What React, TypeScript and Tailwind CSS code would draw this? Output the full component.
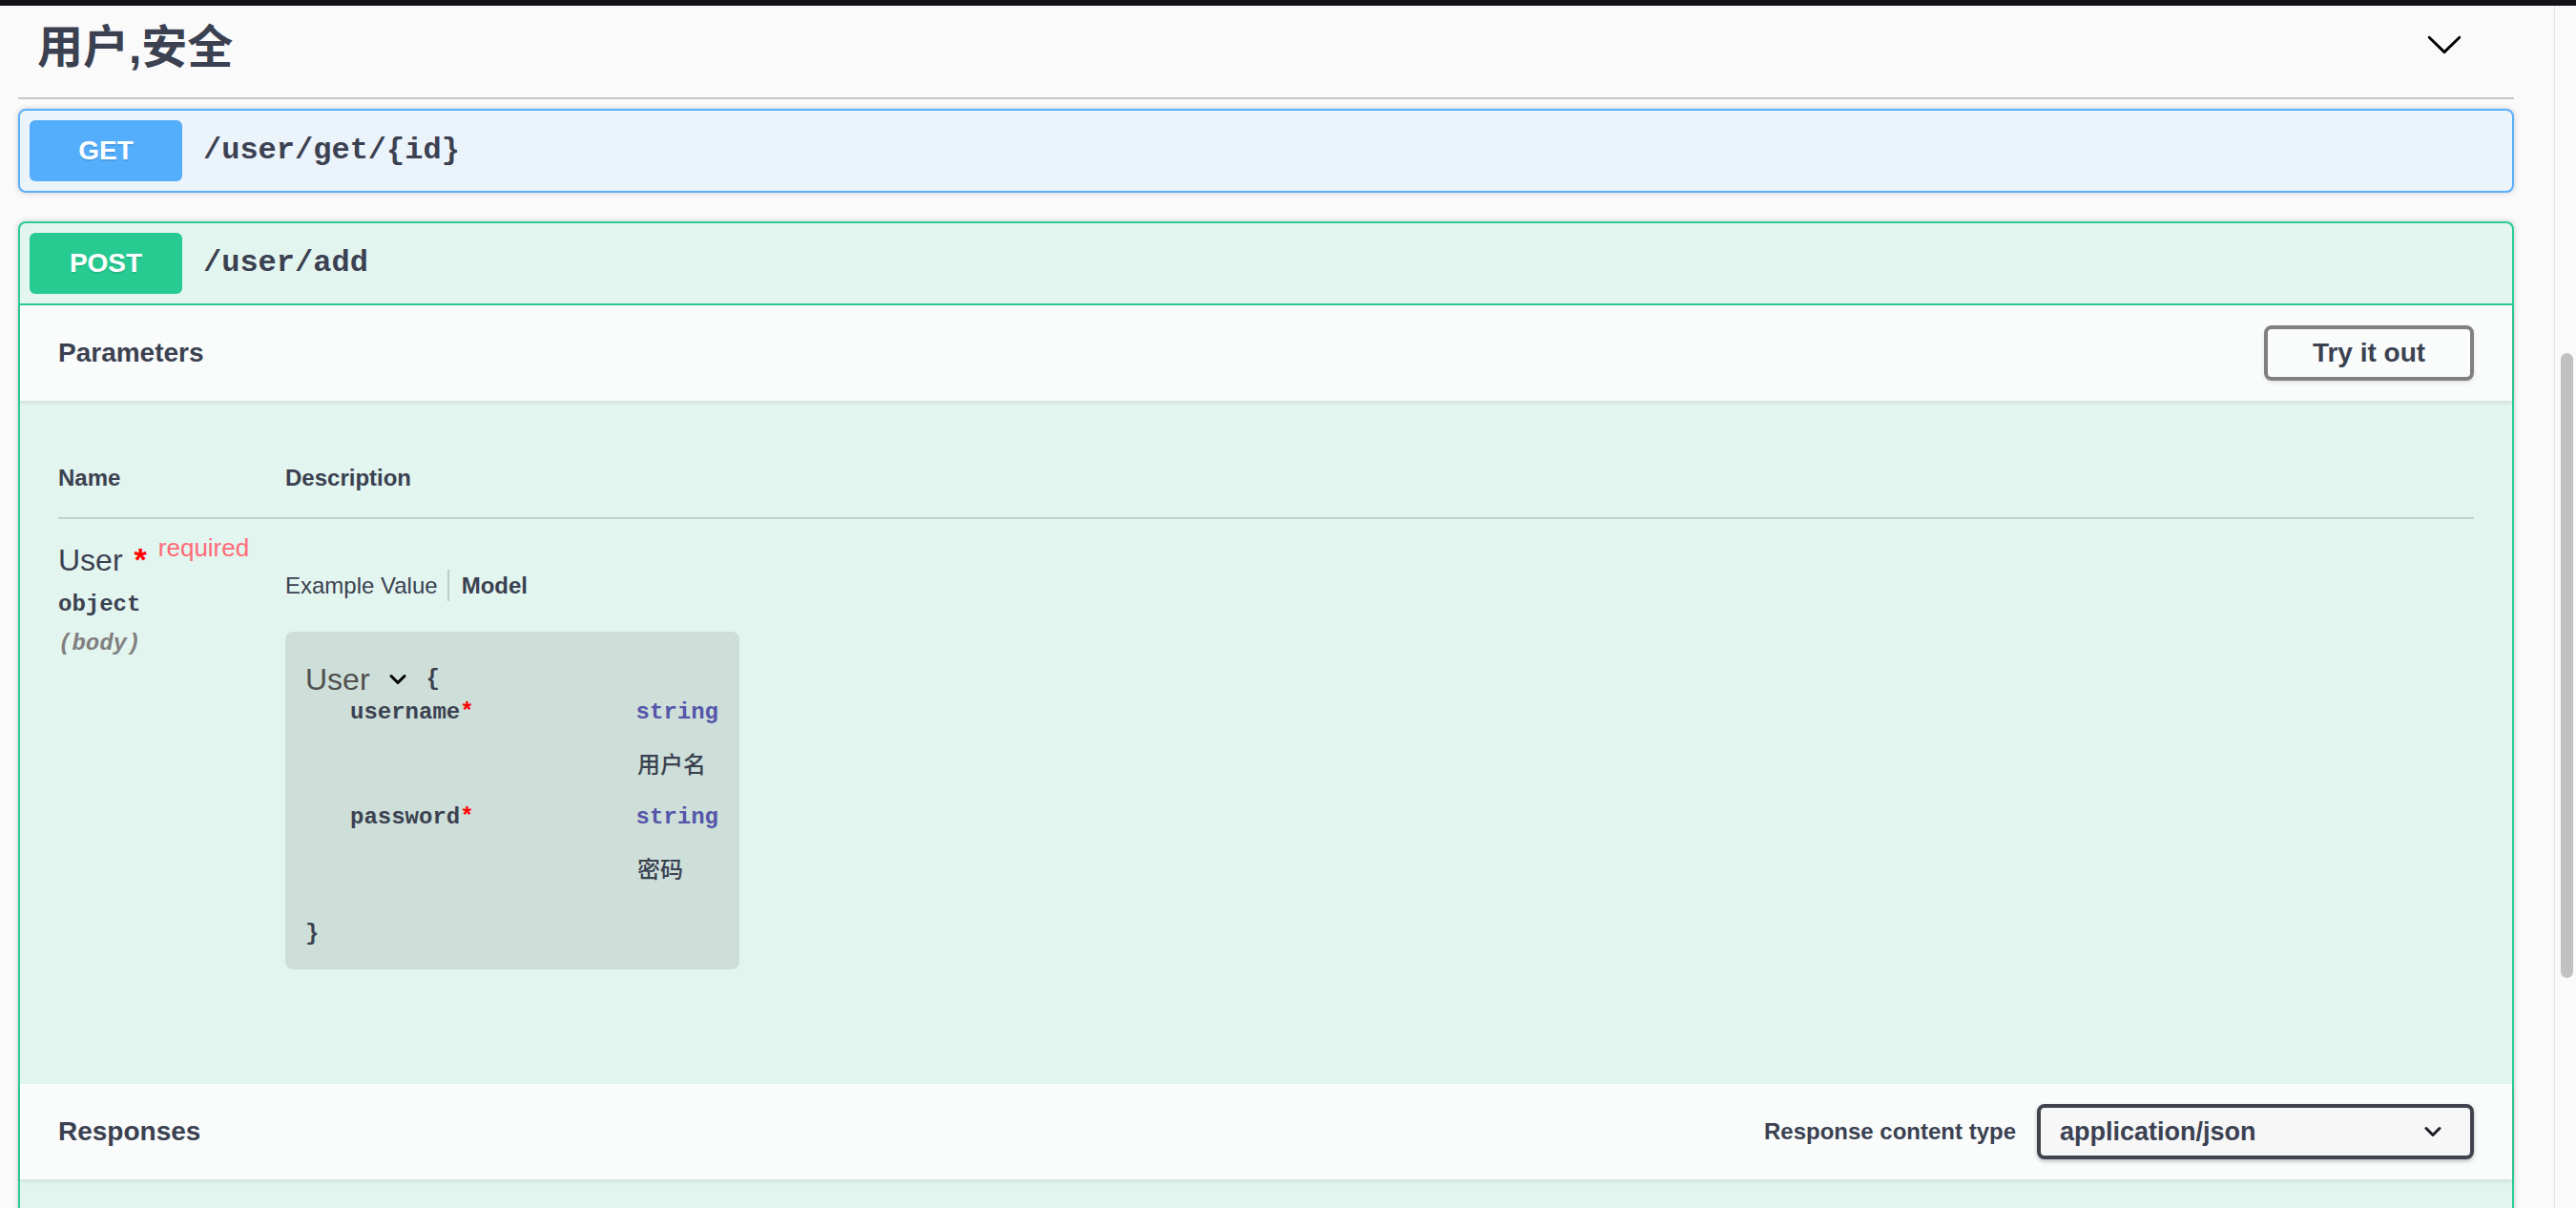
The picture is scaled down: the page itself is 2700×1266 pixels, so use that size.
import React from 'react';

// swagger-like section arrow
function Arrow({ className }: { className?: string }) {
  return (
    <svg viewBox="0 0 20 20" className={className}>
      <path d="M17.418 6.109c.272-.268.709-.268.979 0s.271.701 0 .969l-7.908 7.83c-.27.268-.707.268-.979 0l-7.908-7.83c-.27-.268-.27-.701 0-.969.271-.268.709-.268.979 0L10 13.25l7.418-7.141z" />
    </svg>
  );
}

function SmallChevron({ className, color = '#000' }: { className?: string; color?: string }) {
  return (
    <svg viewBox="0 0 18 12" className={className} fill="none">
      <path d="M2 2.5 L9 9.5 L16 2.5" stroke={color} strokeWidth="3" strokeLinecap="round" strokeLinejoin="round" />
    </svg>
  );
}

const mono = "font-['Liberation_Mono','Noto_Sans_CJK_SC',monospace]";

export default function App() {
  return (
    <div className="flex h-[1266px] w-[2700px] flex-col overflow-hidden bg-[#fafafa] font-['Liberation_Sans','Noto_Sans_CJK_SC',sans-serif] text-[#3b4151]">
      <div className="h-[6px] shrink-0 bg-[#131417]" />

      <div className="flex min-h-0 flex-1">
        <div className="min-w-0 flex-1 pl-[19px] pr-[42px]">
          {/* Tag header */}
          <div className="flex h-[98px] items-center border-b-2 border-[#c5c6cb] pb-[8px] pl-[20px] pr-[53px]">
            <h3 className="flex-1 text-[48px] font-semibold leading-none">用户,安全</h3>
            <Arrow className="-mt-[8px] h-[40px] w-[40px] fill-black" />
          </div>

          {/* GET */}
          <div className="mt-[10px] rounded-[8px] border-2 border-[#5aaffc] bg-[#ebf3fb] shadow-[0_0_6px_rgba(0,0,0,0.19)]">
            <div className="flex items-center p-[10px]">
              <span className="flex h-[64px] w-[160px] items-center justify-center rounded-[6px] bg-[#55aefb] text-[28px] font-bold text-white [text-shadow:0_2px_0_rgba(0,0,0,0.1)]">
                GET
              </span>
              <span className={`${mono} pl-[22px] text-[32px] font-bold`}>/user/get/{'{id}'}</span>
            </div>
          </div>

          {/* POST */}
          <div className="mt-[30px] rounded-t-[8px] border-2 border-b-0 border-[#2bcb93] bg-[#e3f5ef] shadow-[0_0_6px_rgba(0,0,0,0.19)]">
            <div className="flex items-center border-b-2 border-[#2bcb93] p-[10px]">
              <span className="flex h-[64px] w-[160px] items-center justify-center rounded-[6px] bg-[#27cb92] text-[28px] font-bold text-white [text-shadow:0_2px_0_rgba(0,0,0,0.1)]">
                POST
              </span>
              <span className={`${mono} pl-[22px] text-[32px] font-bold`}>/user/add</span>
            </div>

            {/* Parameters header */}
            <div className="relative flex h-[100px] items-center bg-[#f9fcfb] px-[40px] shadow-[0_2px_4px_rgba(0,0,0,0.1)]">
              <h4 className="flex-1 text-[28px] font-bold">Parameters</h4>
              <button className="h-[58px] w-[220px] rounded-[8px] border-4 border-[#808080] text-[28px] font-bold text-[#3b4151] shadow-[0_2px_4px_rgba(0,0,0,0.1)]">
                Try it out
              </button>
            </div>

            {/* Parameters table */}
            <div className="px-[40px] pb-[40px] pt-[40px]">
              <div className="flex border-b-2 border-[#c1d1cf] pb-[23px] pt-[23px] text-[24px] font-bold leading-[36px]">
                <div className="w-[238px]">Name</div>
                <div>Description</div>
              </div>

              <div className="flex pb-[80px] pt-[22px]">
                <div className="w-[238px]">
                  <div className="whitespace-nowrap text-[32px] leading-[40px]">
                    User
                    <span className="ml-[12px] text-[34px] font-bold text-[#ff0000]">*</span>
                    <span className="relative -top-[15px] ml-[12px] text-[26px] text-[#ff6b78]">required</span>
                  </div>
                  <div className={`${mono} mt-[7px] text-[24px] font-bold leading-[36px]`}>object</div>
                  <div className={`${mono} mt-[5px] text-[24px] font-bold italic leading-[36px] text-[#808080]`}>(body)</div>
                </div>

                <div className="flex-1">
                  <div className="mt-[31px] flex h-[33px] items-center text-[24px]">
                    <span>Example Value</span>
                    <span className="ml-[10px] mr-[13px] h-[33px] w-[2px] bg-[#bccbc7]" />
                    <span className="font-bold">Model</span>
                  </div>

                  <div className="mt-[32px] w-[476px] rounded-[8px] bg-[#cddfd8] pb-[20px] pl-[21px] pr-[22px] pt-[32px]">
                    <div className="flex h-[36px] items-center">
                      <span className="text-[32px] text-[#505050]">User</span>
                      <SmallChevron className="ml-[20px] h-[12px] w-[18px]" />
                      <span className={`${mono} ml-[21px] text-[24px] font-bold`}>{'{'}</span>
                    </div>
                    <div className={`${mono} flex h-[34px] items-center text-[24px] font-bold`}>
                      <span className="w-[348px] pl-[47px]">
                        username<span className="text-[#ff0000]">*</span>
                      </span>
                      <span className="text-[#55a]">string</span>
                    </div>
                    <div className="mt-[21px] flex h-[34px] items-center pl-[348px] text-[24px] font-medium">用户名</div>
                    <div className={`${mono} mt-[21px] flex h-[34px] items-center text-[24px] font-bold`}>
                      <span className="w-[348px] pl-[47px]">
                        password<span className="text-[#ff0000]">*</span>
                      </span>
                      <span className="text-[#55a]">string</span>
                    </div>
                    <div className="mt-[21px] flex h-[34px] items-center pl-[348px] text-[24px] font-medium">密码</div>
                    <div className={`${mono} mt-[33px] flex h-[34px] items-center text-[24px] font-bold`}>{'}'}</div>
                  </div>
                </div>
              </div>
            </div>

            {/* Responses header */}
            <div className="relative flex h-[100px] items-center bg-[#f9fcfb] px-[40px] shadow-[0_2px_4px_rgba(0,0,0,0.1)]">
              <h4 className="flex-1 text-[28px] font-bold">Responses</h4>
              <label className="mr-[22px] text-[24px] font-bold">Response content type</label>
              <div className="flex h-[58px] w-[458px] items-center rounded-[8px] border-4 border-[#41444e] bg-[#f7f7f7] pl-[20px] pr-[30px] shadow-[0_2px_4px_rgba(0,0,0,0.25)]">
                <span className="flex-1 text-[27px] font-bold">application/json</span>
                <SmallChevron className="h-[12px] w-[18px]" color="#1d1f24" />
              </div>
            </div>
            <div className="h-[200px]" />
          </div>
        </div>

        {/* scrollbar */}
        <div className="w-[23px] shrink-0 border-l border-[#e6e6e6] bg-[#fafafa]">
          <div className="ml-[6px] mt-[364px] h-[655px] w-[13px] rounded-full bg-[#c1c1c1]" />
        </div>
      </div>
    </div>
  );
}
